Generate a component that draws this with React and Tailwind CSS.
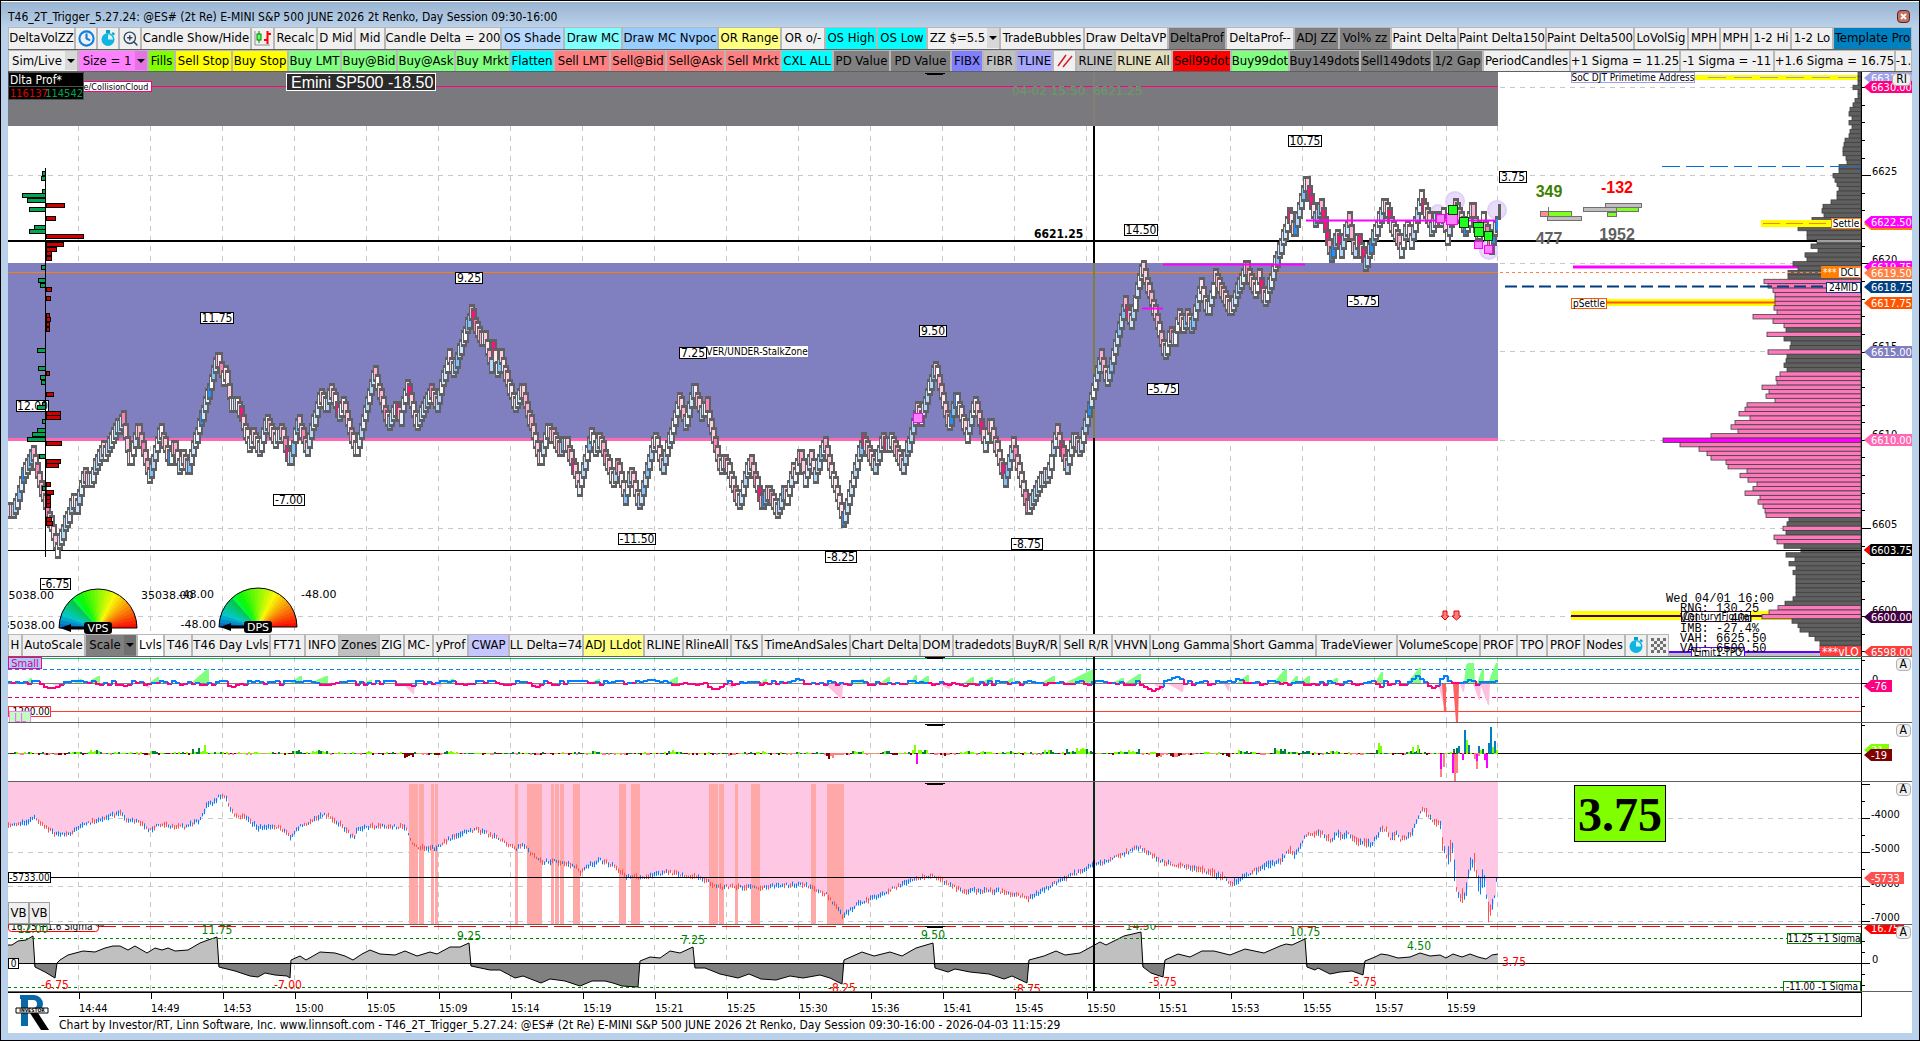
import React from 'react';
import { Clock, ZoomIn } from 'lucide-react';

const GRAY = 'bg-[#808080]';
const SILVER = 'bg-[#c0c0c0]';
const LIGHT = 'bg-[#f0f0f0]';
const CYAN = 'bg-[#00ffff]';
const GREEN = 'bg-[#80ff80]';
const SALMON = 'bg-[#ff8080]';

const Stopwatch = () => (
  <svg viewBox="0 0 18 18" className="h-[18px] w-[18px]">
    <rect x="7" y="1" width="4" height="3" fill="#00a0d0" />
    <path d="M14 3l2 2-1.500 1.500-2-2z" fill="#00a0d0" />
    <circle cx="9" cy="10.500" r="6.500" fill="#10b4e0" />
    <path d="M9 10.500V5.500A5 5 0 0 1 14 10.500z" fill="#d8f2fa" />
  </svg>
);

const CandleIcon = () => (
  <svg viewBox="0 0 18 18" className="h-[18px] w-[18px]">
    <path d="M1 2v14h15" stroke="#909090" fill="none" />
    <path d="M5 2v12" stroke="#008000" />
    <rect x="3" y="5" width="4" height="6" fill="#60ff60" stroke="#008000" />
    <path d="M13.500 2v13M10 11h4M13 5h4" stroke="#ff0000" strokeWidth="2" />
  </svg>
);

const SlashIcon = () => (
  <svg viewBox="0 0 18 18" className="h-[18px] w-[18px]">
    <path d="M2 14L10 3M7 15L16 4" stroke="#d02020" strokeWidth="1.500" />
  </svg>
);

const CheckerIcon = () => (
  <svg viewBox="0 0 15 15" className="h-[15px] w-[15px]">
    {[0, 1, 2, 3, 4].map((r) =>
      [0, 1, 2, 3, 4].map((c) => (r + c) % 2 === 0 && (
        <rect key={`${r}-${c}`} x={c * 3} y={r * 3} width="3" height="3" fill="#707070" />
      ))
    )}
  </svg>
);

const topRow = [
  { text: 'DeltaVolZZ', w: 'w-[67px]', bg: LIGHT },
  { label: 'Clock', icon: <Clock className="h-[17px] w-[17px] text-[#1080e0]" strokeWidth={3} />, w: 'w-[22px]', bg: LIGHT },
  { label: 'Stopwatch', icon: <Stopwatch />, w: 'w-[22px]', bg: LIGHT },
  { label: 'Zoom', icon: <ZoomIn className="h-[17px] w-[17px] text-[#304860]" strokeWidth={2} />, w: 'w-[22px]', bg: LIGHT },
  { text: 'Candle Show/Hide', w: 'w-[110px]', bg: LIGHT },
  { label: 'Candles', icon: <CandleIcon />, w: 'w-[23px]', bg: LIGHT },
  { text: 'Recalc', w: 'w-[43px]', bg: LIGHT },
  { text: 'D Mid', w: 'w-[38px]', bg: LIGHT },
  { text: 'Mid', w: 'w-[30px]', bg: LIGHT },
  { text: 'Candle Delta = 200', w: 'w-[116px]', bg: LIGHT },
  { text: 'OS Shade', w: 'w-[63px]', bg: 'bg-[#b4d8ff]' },
  { text: 'Draw MC', w: 'w-[58px]', bg: 'bg-[#80ffff]' },
  { text: 'Draw MC Nvpoc', w: 'w-[96px]', bg: 'bg-[#99ccff]' },
  { text: 'OR Range', w: 'w-[63px]', bg: 'bg-[#ffff80]' },
  { text: 'OR o/-', w: 'w-[44px]', bg: LIGHT },
  { text: 'OS High', w: 'w-[52px]', bg: CYAN },
  { text: 'OS Low', w: 'w-[50px]', bg: CYAN },
  { text: 'ZZ $=5.5', w: 'w-[73px]', bg: LIGHT, drop: 'bg-[#d8d8d8]' },
  { text: 'TradeBubbles', w: 'w-[84px]', bg: LIGHT },
  { text: 'Draw DeltaVP', w: 'w-[84px]', bg: LIGHT },
  { text: 'DeltaProf', w: 'w-[58px]', bg: GRAY },
  { text: 'DeltaProf--', w: 'w-[68px]', bg: LIGHT },
  { text: 'ADJ ZZ', w: 'w-[45px]', bg: GRAY },
  { text: 'Vol% zz', w: 'w-[52px]', bg: GRAY },
  { text: 'Paint Delta', w: 'w-[67px]', bg: LIGHT },
  { text: 'Paint Delta150', w: 'w-[88px]', bg: LIGHT },
  { text: 'Paint Delta500', w: 'w-[88px]', bg: LIGHT },
  { text: 'LoVolSig', w: 'w-[54px]', bg: LIGHT },
  { text: 'MPH', w: 'w-[32px]', bg: LIGHT },
  { text: 'MPH', w: 'w-[31px]', bg: LIGHT },
  { text: '1-2 Hi', w: 'w-[40px]', bg: LIGHT },
  { text: '1-2 Lo', w: 'w-[42px]', bg: LIGHT },
  { text: 'Template Pro', w: 'w-[79px]', bg: 'bg-[#0080c0]' }
];

const tradeRow = [
  { text: 'Sim/Live', w: 'w-[70px]', bg: LIGHT, drop: 'bg-[#d8d8d8]' },
  { text: 'Size = 1', w: 'w-[70px]', bg: 'bg-[#ff80ff]', drop: 'bg-[#e673e6]' },
  { text: 'Fills', w: 'w-[27px]', bg: 'bg-[#80ff00]' },
  { text: 'Sell Stop', w: 'w-[57px]', bg: 'bg-[#ffff00]' },
  { text: 'Buy Stop', w: 'w-[56px]', bg: 'bg-[#ffff00]' },
  { text: 'Buy LMT', w: 'w-[53px]', bg: GREEN },
  { text: 'Buy@Bid', w: 'w-[56px]', bg: GREEN },
  { text: 'Buy@Ask', w: 'w-[58px]', bg: GREEN },
  { text: 'Buy Mrkt', w: 'w-[55px]', bg: GREEN },
  { text: 'Flatten', w: 'w-[44px]', bg: CYAN },
  { text: 'Sell LMT', w: 'w-[56px]', bg: SALMON },
  { text: 'Sell@Bid', w: 'w-[56px]', bg: SALMON },
  { text: 'Sell@Ask', w: 'w-[59px]', bg: SALMON },
  { text: 'Sell Mrkt', w: 'w-[56px]', bg: SALMON },
  { text: 'CXL ALL', w: 'w-[52px]', bg: CYAN },
  { text: 'PD Value', w: 'w-[57px]', bg: GRAY },
  { text: 'PD Value', w: 'w-[61px]', bg: GRAY },
  { text: 'FIBX', w: 'w-[32px]', bg: 'bg-[#8080ff]' },
  { text: 'FIBR', w: 'w-[33px]', bg: SILVER },
  { text: 'TLINE', w: 'w-[37px]', bg: 'bg-[#a6a6ff]' },
  { label: 'Parallel lines', icon: <SlashIcon />, w: 'w-[23px]', bg: LIGHT },
  { text: 'RLINE', w: 'w-[39px]', bg: SILVER },
  { text: 'RLINE All', w: 'w-[57px]', bg: 'bg-[#e0dcbc]' },
  { text: 'Sell99dot', w: 'w-[59px]', bg: 'bg-[#ff0000]' },
  { text: 'Buy99dot', w: 'w-[58px]', bg: GREEN },
  { text: 'Buy149dots', w: 'w-[71px]', bg: GRAY },
  { text: 'Sell149dots', w: 'w-[72px]', bg: GRAY },
  { text: '1/2 Gap', w: 'w-[51px]', bg: GRAY },
  { text: 'PeriodCandles', w: 'w-[87px]', bg: LIGHT },
  { text: '+1 Sigma = 11.25', w: 'w-[110px]', bg: LIGHT },
  { text: '-1 Sigma = -11', w: 'w-[94px]', bg: LIGHT },
  { text: '+1.6 Sigma = 16.75', w: 'w-[121px]', bg: LIGHT },
  { text: '-1.', w: 'w-[17px]', bg: LIGHT }
];

const chartRow = [
  { text: 'H', w: 'w-[14px]', bg: LIGHT },
  { text: 'AutoScale', w: 'w-[63px]', bg: LIGHT },
  { text: 'Scale', w: 'w-[52px]', bg: GRAY, drop: 'bg-[#707070]' },
  { text: 'Lvls', w: 'w-[27px]', bg: 'bg-white' },
  { text: 'T46', w: 'w-[28px]', bg: LIGHT },
  { text: 'T46 Day Lvls', w: 'w-[78px]', bg: LIGHT },
  { text: 'FT71', w: 'w-[35px]', bg: LIGHT },
  { text: 'INFO', w: 'w-[34px]', bg: LIGHT },
  { text: 'Zones', w: 'w-[40px]', bg: SILVER },
  { text: 'ZIG', w: 'w-[25px]', bg: LIGHT },
  { text: 'MC-', w: 'w-[29px]', bg: LIGHT },
  { text: 'yProf', w: 'w-[35px]', bg: LIGHT },
  { text: 'CWAP', w: 'w-[41px]', bg: 'bg-[#c6c6ff]' },
  { text: 'LL Delta=74', w: 'w-[74px]', bg: LIGHT },
  { text: 'ADJ LLdot', w: 'w-[61px]', bg: 'bg-[#ffff80]' },
  { text: 'RLINE', w: 'w-[39px]', bg: LIGHT },
  { text: 'RlineAll', w: 'w-[48px]', bg: LIGHT },
  { text: 'T&S', w: 'w-[31px]', bg: LIGHT },
  { text: 'TimeAndSales', w: 'w-[88px]', bg: LIGHT },
  { text: 'Chart Delta', w: 'w-[70px]', bg: LIGHT },
  { text: 'DOM', w: 'w-[33px]', bg: LIGHT },
  { text: 'tradedots', w: 'w-[60px]', bg: LIGHT },
  { text: 'BuyR/R', w: 'w-[47px]', bg: LIGHT },
  { text: 'Sell R/R', w: 'w-[52px]', bg: LIGHT },
  { text: 'VHVN', w: 'w-[38px]', bg: LIGHT },
  { text: 'Long Gamma', w: 'w-[81px]', bg: LIGHT },
  { text: 'Short Gamma', w: 'w-[85px]', bg: LIGHT },
  { text: 'TradeViewer', w: 'w-[81px]', bg: LIGHT },
  { text: 'VolumeScope', w: 'w-[83px]', bg: LIGHT },
  { text: 'PROF', w: 'w-[37px]', bg: LIGHT },
  { text: 'TPO', w: 'w-[30px]', bg: LIGHT },
  { text: 'PROF', w: 'w-[37px]', bg: LIGHT },
  { text: 'Nodes', w: 'w-[41px]', bg: LIGHT },
  { label: 'Stopwatch', icon: <Stopwatch />, w: 'w-[22px]', bg: LIGHT },
  { label: 'Pattern', icon: <CheckerIcon />, w: 'w-[22px]', bg: LIGHT }
];

const ToolBar = ({ items, className }) => (
  <div className={`flex overflow-hidden bg-[#c0c0c0] ${className}`}>
    {items.map((item, i) => (
      <button
        key={i}
        type="button"
        aria-label={item.label}
        className={`flex shrink-0 items-center justify-center overflow-hidden whitespace-nowrap border-x border-t border-[#b8b8b8] pb-px text-[13px] leading-4 text-black ${item.bg} ${item.w}`}
      >
        {item.drop ? (
          <>
            <span className="flex-1 text-center">{item.text}</span>
            <span className={`flex h-full w-3 items-center justify-center ${item.drop}`}>
              <svg viewBox="0 0 8 4" className="h-1 w-2"><path d="M0 0h8L4 4z" /></svg>
            </span>
          </>
        ) : (
          item.icon || item.text
        )}
      </button>
    ))}
  </div>
);

/* ---------- chart data ---------- */

// deterministic noise in 0..1
const noise = (n) => {
  const s = Math.sin(n * 12.9898 + 4.137) * 43758.5453;
  return s - Math.floor(s);
};

const swings = [
  [8, 500], [13, 520], [22, 467], [24, 480], [32, 447], [56, 556], [72, 493], [76, 512], [83, 467], [89, 490],
  [101, 440], [104, 463], [113, 423], [122, 427], [129, 470], [137, 420], [148, 485], [159, 421], [169, 470], [173, 438],
  [178, 475], [182, 448], [187, 476], [217, 347], [222, 385], [225, 365], [230, 413], [237, 395], [248, 452], [252, 428],
  [258, 458], [266, 412], [274, 449], [280, 421], [289, 470], [297, 412], [306, 458], [319, 386], [325, 415], [330, 382],
  [338, 422], [342, 395], [355, 460], [373, 364], [387, 431], [395, 401], [400, 425], [406, 377], [416, 432], [430, 381],
  [436, 414], [448, 346], [452, 379], [470, 305], [481, 348], [484, 330], [490, 372], [492, 337], [496, 379], [500, 350],
  [514, 414], [521, 381], [539, 467], [547, 421], [559, 457], [565, 434], [578, 494], [591, 425], [594, 456], [598, 430],
  [612, 487], [617, 456], [624, 503], [630, 465], [638, 511], [654, 430], [662, 476], [678, 390], [684, 431], [693, 381],
  [700, 421], [706, 398], [719, 475], [724, 452], [738, 511], [749, 452], [761, 511], [767, 483], [776, 520], [783, 482],
  [786, 507], [792, 463], [794, 484], [799, 443], [804, 486], [810, 448], [814, 481], [824, 434], [842, 529], [862, 430],
  [874, 476], [881, 430], [885, 456], [890, 430], [902, 476], [916, 399], [920, 425], [934, 359], [948, 432], [955, 390],
  [966, 441], [974, 395], [984, 450], [989, 417], [1004, 486], [1012, 438], [1027, 516], [1044, 465], [1047, 484], [1056, 421],
  [1065, 476], [1073, 430], [1079, 458], [1100, 350], [1106, 388], [1124, 297], [1130, 330], [1141, 258], [1151, 310], [1164, 361],
  [1169, 325], [1173, 350], [1178, 306], [1182, 335], [1186, 306], [1191, 335], [1200, 279], [1207, 321], [1214, 270], [1230, 317],
  [1245, 258], [1254, 299], [1258, 270], [1264, 308], [1289, 205], [1293, 241], [1305, 169], [1314, 228], [1320, 196], [1330, 264],
  [1336, 227], [1340, 256], [1348, 213], [1353, 261], [1357, 227], [1364, 273], [1383, 195], [1400, 256], [1405, 219], [1410, 247],
  [1420, 190], [1430, 235], [1436, 210], [1440, 228], [1442, 205], [1446, 246], [1454, 196], [1465, 237], [1471, 199], [1477, 245],
  [1482, 213], [1490, 255], [1498, 205]
];

// keep the brick bodies inside the swing extremes
const pivots = swings.map(([x, y], i) => {
  const prev = swings[i - 1] || swings[i + 1];
  return [x, y < prev[1] ? y + 8 : y - 8];
});

const valueAt = (pts, x) => {
  for (let i = 1; i < pts.length; i++) {
    if (x <= pts[i][0]) {
      const [x0, y0] = pts[i - 1];
      const [x1, y1] = pts[i];
      return y0 + ((y1 - y0) * (x - x0)) / (x1 - x0 || 1);
    }
  }
  return pts[pts.length - 1][1];
};

const upColors = ['#ffffff', '#e6f2ff', '#cce6ff', '#b0d8ff', '#80c0ff', '#e6f2ff', '#cce6ff', '#b0d8ff', '#f4f8ff'];
const downColors = ['#ffe6f0', '#ffe6f0', '#ffcce0', '#ffb0d0', '#ff80b8', '#ffcce0', '#fff4f8', '#ffcce0', '#ffb0d0'];

const bricks = [];
for (let x = 8; x <= 1496; x += 2) {
  const y = Math.round((valueAt(pivots, x) - 175) / 4.41) * 4.41 + 175;
  const up = valueAt(pivots, x + 2) < valueAt(pivots, x);
  const n = noise(x);
  let fill = (up ? upColors : downColors)[Math.floor(n * 9)];
  const strong = x > 1290 ? 0.82 : 0.96;
  if (noise(x + 0.5) > strong) fill = up ? '#2090ff' : '#ff1080';
  bricks.push({ x, y, fill });
}

const profile = [
  3, 3, 3, 8, 3, 3, 6, 8, 11, 12, 9, 12, 9, 11, 12, 16, 17, 18, 18, 15, 14, 22, 22, 28, 26, 24, 22, 24, 24, 30, 38, 39,
  37, 49, 45, 63, 54, 54, 44, 50, 43, 56, 54, 68, 63, 73, 73, 97, 93, 88, 86, 86, 86, 87, 84, 108, 88, 77, 75, 94, 77, 70,
  71, 93, 74, 75, 77, 74, 81, 85, 84, 99, 92, 95, 86, 114, 116, 122, 111, 126, 130, 123, 150, 198, 181, 162, 154, 150,
  135, 133, 114, 121, 113, 104, 108, 116, 101, 103, 98, 96, 95, 72, 74, 78, 75, 87, 84, 77, 60, 75, 66, 72, 65, 68, 65,
  65, 65, 65, 65, 68, 76, 83, 92, 99, 69, 63, 61, 52, 46, 41, 41, 41
];
const pinkRows = [59, 63, 103, 105, 106, 121, 122, 123];
const isPink = (i) => (i >= 47 && i <= 57) || (i >= 68 && i <= 100) || pinkRows.includes(i);

const askBars = [
  [171, 3], [176, 4], [189, 3], [193, 23], [198, 18], [207, 16], [225, 11], [229, 16], [265, 4], [278, 7], [283, 5],
  [348, 8], [366, 7], [375, 5], [380, 4], [402, 3], [405, 8], [419, 3], [428, 8], [432, 13], [437, 18], [454, 6], [486, 3]
];
const bidBars = [
  [203, 18], [216, 9], [234, 37], [242, 17], [247, 10], [251, 5], [256, 5], [287, 5], [296, 4], [313, 3], [317, 4],
  [322, 3], [327, 3], [371, 3], [392, 7], [411, 14], [415, 14], [441, 15], [459, 14], [463, 12], [482, 4], [490, 7],
  [495, 4], [499, 4], [503, 4], [517, 5], [521, 6]
];

const swingTags = [
  [16, 400, 33, '12.00'], [200, 312, 34, '11.75'], [455, 272, 28, '9.25'], [273, 494, 32, '-7.00'], [40, 578, 31, '-6.75'],
  [618, 533, 38, '-11.50'], [679, 347, 28, '7.25'], [919, 325, 28, '9.50'], [825, 551, 32, '-8.25'], [1011, 538, 32, '-8.75'],
  [1124, 224, 34, '14.50'], [1147, 383, 32, '-5.75'], [1347, 295, 32, '-5.75'], [1288, 135, 34, '10.75']
];

const cumulative = [
  [8, 824], [12, 825], [28, 822], [32, 817], [40, 822], [55, 835], [70, 833], [85, 824], [105, 817], [121, 813], [128, 822],
  [138, 820], [148, 830], [160, 825], [185, 827], [200, 820], [207, 804], [212, 804], [218, 797], [225, 798], [233, 814],
  [243, 817], [258, 828], [275, 826], [285, 831], [290, 838], [297, 828], [310, 822], [320, 815], [329, 816], [340, 825],
  [353, 838], [357, 830], [370, 826], [390, 827], [405, 826], [410, 840], [415, 847], [435, 848], [445, 841], [460, 834],
  [475, 829], [490, 835], [500, 840], [515, 849], [523, 844], [535, 858], [541, 862], [555, 861], [575, 866], [580, 872],
  [590, 865], [600, 860], [615, 867], [625, 876], [640, 878], [667, 872], [704, 879], [716, 887], [759, 887], [802, 884],
  [826, 894], [842, 916], [857, 904], [882, 894], [912, 879], [931, 875], [961, 891], [998, 891], [1028, 898], [1053, 884],
  [1084, 869], [1108, 860], [1139, 847], [1163, 862], [1194, 869], [1224, 877], [1231, 884], [1250, 873], [1261, 867],
  [1280, 861], [1289, 850], [1294, 856], [1307, 833], [1311, 836], [1319, 832], [1331, 840], [1337, 832], [1341, 838],
  [1347, 833], [1358, 841], [1372, 844], [1380, 830], [1386, 830], [1390, 840], [1396, 833], [1400, 840], [1411, 835],
  [1421, 809], [1427, 814], [1433, 821], [1440, 824], [1442, 845], [1447, 858], [1452, 848], [1456, 890], [1460, 897],
  [1465, 894], [1470, 863], [1474, 861], [1479, 890], [1483, 874], [1488, 912], [1493, 904], [1497, 872]
];
const cumBars = [];
for (let x = 8; x <= 1497; x += 2) {
  const y = valueAt(cumulative, x) + (noise(x) - 0.5) * 3;
  const up = valueAt(cumulative, x + 2) < valueAt(cumulative, x - 2);
  const wild = x > 1440 ? 20 : x > 1190 ? 7 : 4;
  cumBars.push({ x, y, h: 2 + noise(x + 7) * wild, up: noise(x + 3) > (up ? 0.25 : 0.7) });
}
const cumArea = `M8 782 ${cumBars.map((b) => `L${b.x} ${b.y}h2`).join('')} L1499 870V782z`;

const alertBands = [
  [409, 9], [419, 5], [431, 3], [435, 3], [515, 3], [527, 15], [551, 3], [555, 4], [560, 4], [573, 7], [619, 7], [631, 9],
  [709, 9], [719, 5], [735, 3], [751, 9], [811, 5], [827, 17]
];

const zigzag = [
  [8, 945], [12, 945], [18, 941], [26, 940], [33, 936], [35, 967], [45, 972], [55, 978], [57, 963], [60, 960], [68, 955],
  [83, 951], [95, 952], [105, 948], [113, 946], [120, 946], [128, 950], [135, 946], [147, 953], [155, 948], [162, 950],
  [168, 948], [175, 951], [188, 950], [200, 943], [208, 940], [217, 937], [219, 967], [235, 971], [250, 976], [258, 977],
  [265, 973], [275, 975], [287, 976], [290, 978], [291, 960], [300, 956], [306, 960], [320, 952], [335, 953], [345, 956],
  [353, 960], [362, 954], [370, 950], [380, 954], [395, 955], [405, 951], [417, 956], [430, 952], [437, 954], [450, 947],
  [460, 947], [469, 943], [471, 966], [490, 970], [500, 970], [515, 978], [523, 976], [541, 983], [550, 979], [565, 981],
  [580, 986], [592, 981], [605, 981], [613, 983], [622, 986], [638, 987], [640, 961], [650, 957], [660, 958], [670, 951],
  [680, 953], [693, 947], [695, 968], [705, 968], [720, 974], [738, 978], [749, 974], [761, 979], [776, 980], [790, 976],
  [803, 978], [820, 975], [830, 978], [842, 984], [844, 960], [862, 952], [874, 956], [890, 952], [902, 956], [916, 948],
  [933, 943], [935, 968], [948, 972], [955, 969], [970, 972], [989, 974], [1004, 979], [1012, 976], [1027, 983], [1029, 960],
  [1044, 956], [1056, 951], [1065, 955], [1080, 953], [1100, 942], [1106, 945], [1124, 936], [1141, 932], [1143, 967],
  [1151, 973], [1163, 977], [1165, 960], [1178, 954], [1190, 957], [1202, 951], [1214, 951], [1230, 955], [1245, 949],
  [1264, 953], [1280, 946], [1286, 944], [1292, 945], [1305, 939], [1307, 967], [1315, 970], [1318, 968], [1330, 974],
  [1340, 972], [1352, 971], [1363, 975], [1365, 961], [1375, 957], [1381, 954], [1388, 955], [1398, 958], [1410, 957],
  [1420, 953], [1430, 956], [1440, 955], [1446, 958], [1453, 954], [1462, 957], [1470, 954], [1478, 957], [1486, 959],
  [1492, 955], [1498, 954]
];
const clipZig = (keep) =>
  `M8 963L${zigzag.map(([x, y]) => `${x} ${keep === 'up' ? Math.min(y, 963) : Math.max(y, 963)}`).join('L')}L1498 963z`;

const zigLabels = [
  [33, 933, '12.00', '#008000'], [217, 934, '11.75', '#008000'], [469, 940, '9.25', '#008000'], [693, 944, '7.25', '#008000'],
  [933, 939, '9.50', '#008000'], [1141, 930, '14.50', '#008000'], [1305, 936, '10.75', '#008000'], [1419, 950, '4.50', '#008000'],
  [55, 989, '-6.75', '#ff0000'], [288, 989, '-7.00', '#ff0000'], [842, 992, '-8.25', '#ff0000'], [1027, 993, '-8.75', '#ff0000'],
  [1163, 986, '-5.75', '#ff0000'], [1363, 986, '-5.75', '#ff0000']
];

// [peak x, height, ramp width]
const buyRamps = [
  [30, 5, 4], [80, 4, 6], [98, 7, 12], [157, 6, 8], [207, 14, 16], [300, 7, 10], [326, 7, 16], [370, 3, 6], [452, 4, 10],
  [598, 4, 8], [676, 6, 10], [765, 4, 5], [862, 4, 12], [888, 6, 8], [915, 8, 4], [927, 7, 10], [972, 6, 8], [991, 6, 10],
  [1011, 5, 6], [1053, 7, 12], [1093, 14, 28], [1122, 5, 10], [1139, 9, 14], [1247, 8, 10], [1285, 14, 12], [1296, 7, 6],
  [1308, 7, 8], [1336, 5, 8], [1381, 11, 6], [1419, 15, 12], [1482, 14, 5], [1496, 20, 8]
];
const sellRamps = [
  [60, 4, 8], [148, 4, 6], [413, 10, 10], [440, 3, 6], [540, 5, 8], [732, 4, 6], [841, 15, 16], [949, 5, 10], [1162, 7, 8],
  [1182, 8, 14], [1228, 7, 4], [1444, 22, 6], [1463, 8, 3], [1479, 16, 6], [1488, 21, 8]
];
const dips = [[50, -6, 10], [124, -3, 6], [231, -5, 6], [411, -4, 5], [535, -4, 6], [714, -7, 10], [870, -3, 4], [963, -4, 5], [1152, -8, 10], [1380, -4, 4], [1432, -5, 7]];
const bumps = [[650, 4, 8], [797, 4, 6], [1175, 6, 8], [1237, 5, 4], [1416, 7, 5], [1443, 8, 4], [1469, 3, 6]];

const smallTrades = [];
for (let x = 8; x <= 1496; x += 4) {
  let v = (noise(x * 3) - 0.5) * 5;
  [...dips, ...bumps].forEach(([cx, h, w]) => {
    if (Math.abs(x - cx) < w) v = h * (1 - Math.abs(x - cx) / (w * 1.6));
  });
  smallTrades.push({ x, v });
}

const histogram = [];
for (let x = 8; x <= 1498; x += 2) {
  let v = (noise(x * 1.7) - 0.5) * 3;
  buyRamps.forEach(([cx, h, w]) => {
    if (x <= cx && x > cx - w) v = 1 + h * 0.35 * noise(x);
  });
  sellRamps.forEach(([cx, h, w]) => {
    if (x <= cx && x > cx - w && h < 20) v = -1 - h * 0.35 * noise(x);
  });
  const strong = noise(x + 11) > 0.5;
  const fill = v > 0 ? (strong ? '#80ff00' : '#008040') : strong ? '#ff8080' : '#800000';
  histogram.push({ x, v, fill });
}
const spikes = [
  [204, 8, '#80ff00'], [914, 8, '#80ff00'], [916, -10, '#ff00ff'], [1378, 10, '#80ff00'], [1380, 7, '#80ff00'],
  [1412, 6, '#80ff00'], [1417, 8, '#80ff00'], [1440, -23, '#ff8080'], [1440, -15, '#ff00ff'], [1443, -13, '#ff8080'],
  [1452, -19, '#ff00ff'], [1454, -28, '#ff8080'], [1456, -19, '#ff8080'], [1453, 4, '#008040'], [1456, 5, '#008040'],
  [1458, 7, '#0080c0'], [1462, -6, '#ff00ff'], [1464, 23, '#0080c0'], [1466, 13, '#80ff00'], [1468, 8, '#0080c0'],
  [1476, -15, '#ff8080'], [1476, -7, '#ff00ff'], [1478, 7, '#0080c0'], [1484, -6, '#ff00ff'], [1486, -14, '#ff00ff'],
  [1488, 10, '#0080c0'], [1490, 26, '#0080c0'], [1492, 6, '#80ff00'], [1494, 12, '#0080c0']
];

const times = [
  '14:44', '14:49', '14:53', '15:00', '15:05', '15:09', '15:14', '15:19', '15:21', '15:25',
  '15:30', '15:36', '15:41', '15:45', '15:50', '15:51', '15:53', '15:55', '15:57', '15:59'
];
const gridX = [...times.map((_, i) => 78 + i * 72), 1497];

/* ---------- chart parts ---------- */

const Grid = ({ top, bottom, rows }) => (
  <g stroke="#c8c8c8" strokeDasharray="5 5" shapeRendering="crispEdges">
    {gridX.map((x) => <path key={x} d={`M${x}.5 ${top}V${bottom}`} />)}
    {rows.map((y) => <path key={y} d={`M8 ${y}.5H4000`} />)}
  </g>
);

const Tag = ({ x, y, w, h = 12, text, size = 12, border = '#000000', fill = '#ffffff', color = '#000000' }) => (
  <g>
    <rect x={x + 0.5} y={y + 0.5} width={w - 1} height={h - 1} fill={fill} stroke={border} />
    <text x={x + w / 2} y={y + h / 2 + size * 0.37} textAnchor="middle" fontSize={size} fill={color}>{text}</text>
  </g>
);

const Badge = ({ y, text, fill, w = 48, tip }) => (
  <g>
    <path d={`M1864 ${y}l7 -6h${w - 7}v12h-${w - 7}z`} fill={fill} />
    {tip && <path d={`M1864 ${y}l6 -5v10z`} fill={tip} />}
    <text x="1871" y={y + 4} fontSize="11" fill="#ffffff">{text}</text>
  </g>
);

const Handle = ({ y }) => <path d={`M925 ${y}h20v1h-2v1h-16v-1h-2z`} fill="#000000" />;

const Pane = ({ top, h, height, plot, side, children }) => (
  <section className="relative flex border-b border-[#606060] bg-white">
    <svg className={`min-w-0 flex-1 ${height}`}>
      <g transform={`translate(-8 ${-top})`}>{plot}</g>
    </svg>
    <svg viewBox={`1498 ${top} 414 ${h}`} className={`w-[414px] shrink-0 ${height}`}>
      {side}
      <path d={`M1861.5 ${top}v${h}`} stroke="#000000" />
    </svg>
    {children}
  </section>
);

const ScaleButton = ({ text = 'A' }) => (
  <button type="button" className="absolute right-px top-px h-[13px] rounded-sm border border-[#b0b0b0] bg-[#f0f0f0] px-[3px] text-[12px] leading-[11px]">
    {text}
  </button>
);

const Gauge = ({ cx, cy, text }) => {
  const wedges = Array.from({ length: 30 }, (_, i) => {
    const a0 = Math.PI * (1 - i / 30);
    const a1 = Math.PI * (1 - (i + 1.3) / 30);
    const t = i / 29;
    const hue = t < 0.33 ? 208 - t * 270 : t < 0.66 ? 119 - (t - 0.33) * 180 : 60 - (t - 0.66) * 170;
    return (
      <path
        key={i}
        d={`M${cx} ${cy}L${cx + 39 * Math.cos(a0)} ${cy - 39 * Math.sin(a0)}L${cx + 39 * Math.cos(a1)} ${Math.min(cy, cy - 39 * Math.sin(a1))}z`}
        fill={`hsl(${hue} 95% ${t < 0.25 ? 40 : 50}%)`}
      />
    );
  });
  return (
    <g>
      {wedges}
      <path d={`M${cx - 39} ${cy}a39 39 0 0 1 78 0z`} fill="none" stroke="#000000" />
      <path d={`M${cx - 38} ${cy}l11 -4v2.500h27v3h-27v2.500z`} />
      <rect x={cx - 14} y={cy - 6} width="28" height="12" rx="3" />
      <text x={cx} y={cy + 4} textAnchor="middle" fontSize="11" fill="#ffffff">{text}</text>
    </g>
  );
};

const PricePlot = () => (
  <g>
    <Grid top={126} bottom={656} rows={[175, 528, 616]} />
    <path d="M1498 87.500H4000M1498 263.500H4000M1498 351.500H4000M1498 440.500H4000" stroke="#c8c8c8" strokeDasharray="5 5" />
    <rect x="8" y="72" width="1490" height="54" fill="#7a7a7e" />
    <rect x="8" y="263" width="1490" height="175" fill="#8080c0" />
    <path d="M8 86.500H1498" stroke="#ff0080" />
    <path d="M8 272.500H1498" stroke="#ff8000" />
    <rect x="8" y="438" width="1492" height="3" fill="#ff69b4" />
    <path d="M8 550.500H4000" stroke="#000000" />
    <rect x="8" y="240" width="4000" height="2" />

    {/* crosshair */}
    <rect x="1093" y="72" width="2" height="54" fill="#857f78" />
    <rect x="1093" y="126" width="2" height="137" />
    <rect x="1093" y="263" width="2" height="175" fill="#7f7f40" />
    <rect x="1093" y="438" width="2" height="220" />

    <g fill="#e8dcfa" stroke="#e0d0fa" strokeWidth="2">
      <circle cx="1455" cy="201" r="9" />
      <circle cx="1438" cy="212" r="7" />
      <circle cx="1497" cy="210" r="9" />
      <circle cx="1494" cy="232" r="8" />
      <circle cx="1489" cy="250" r="9" />
    </g>

    {bricks.map((b) => (
      <g key={b.x} shapeRendering="crispEdges">
        <rect x={b.x - 1} y={b.y - 8} width="6" height="17" fill="#606060" />
        <rect x={b.x} y={b.y - 5} width="3" height="11" fill={b.fill} />
      </g>
    ))}

    <path d="M1306 220.500H1496M1163 264.500H1305M1142 308.500H1163" stroke="#ff00ff" strokeWidth="2" />
    <g fill="#ff80ff" stroke="#ff00ff">
      <rect x="913.500" y="413.500" width="9" height="9" />
      <rect x="1436.500" y="214.500" width="8" height="8" />
      <rect x="1446.500" y="213.500" width="11" height="11" />
      <rect x="1474.500" y="241.500" width="8" height="7" />
      <rect x="1484.500" y="245.500" width="8" height="8" />
    </g>
    <g fill="#20ff20" stroke="#004000">
      <rect x="1448.500" y="205.500" width="9" height="9" />
      <rect x="1459.500" y="217.500" width="9" height="10" />
      <rect x="1473.500" y="222.500" width="10" height="5" />
      <rect x="1474.500" y="227.500" width="9" height="9" />
      <rect x="1484.500" y="231.500" width="8" height="9" />
    </g>

    <Tag x={706} y={346} w={102} h={11} size={10} text="VER/UNDER-StalkZone" border="#ffffff" />
    {swingTags.map(([x, y, w, text]) => <Tag key={`${x}-${y}`} x={x} y={y} w={w} text={text} />)}
    <text x="1034" y="238" fontSize="12" fontWeight="bold">6621.25</text>

    {/* bid/ask delta profile */}
    <path d="M45.500 168V557" stroke="#000000" />
    {askBars.map(([y, w]) => <rect key={y} x={45.5 - w} y={y + 0.5} width={w} height="4" fill="#00a651" stroke="#000000" />)}
    {bidBars.map(([y, w]) => <rect key={y} x="46.500" y={y + 0.5} width={w} height="4" fill="#d00000" stroke="#000000" />)}

    {/* header boxes */}
    <Tag x={80} y={81} w={72} h={11} size={9} text="e/CollisionCloud" border="#ff0080" />
    <rect x="8" y="72" width="76" height="27" />
    <path d="M8.500 72.500h75v27h-75zM9 86.500h75" fill="none" stroke="#505050" />
    <text x="10" y="84" fontSize="12" fill="#ffffff">Dlta Prof*</text>
    <text x="10" y="97" fontSize="11" fill="#e00000">116137</text>
    <text x="83" y="97" fontSize="11" textAnchor="end" fill="#00a651">114542</text>
    <rect x="286.500" y="73.500" width="149" height="17" fill="#2a2a2a" stroke="#ffffff" />
    <text x="291" y="88" fontSize="16" fill="#ffffff" className="font-['Liberation_Sans']">Emini SP500 -18.50</text>
    <text x="1012" y="95" fontSize="12" fill="#6a9a6a" className="font-['DejaVu_Sans']">04-02 15:50&nbsp; 6621.25</text>
    <Handle y={73} />

    {/* pressure gauges */}
    <g fontSize="11" className="font-['DejaVu_Sans']">
      <text x="54" y="599" textAnchor="end">35038.00</text>
      <text x="55" y="629" textAnchor="end">35038.00</text>
      <text x="141" y="599">35038.00</text>
      <text x="214" y="598" textAnchor="end">-48.00</text>
      <text x="216" y="628" textAnchor="end">-48.00</text>
      <text x="301" y="598">-48.00</text>
      <Gauge cx={98} cy={628} text="VPS" />
      <Gauge cx={258} cy={627} text="DPS" />
    </g>
    <path d="M1443 611h4v5h2l-4 4l-4 -4h2zM1454 611h5v5h2l-4.500 4l-4.500 -4h2z" fill="#ff8080" stroke="#e00000" />
  </g>
);

const PriceSide = () => (
  <g>
    <circle cx="1497" cy="210" r="9" fill="#e8dcfa" stroke="#e0d0fa" strokeWidth="2" />
    <rect x="1497" y="204" width="4" height="16" fill="#606060" />
    <path d="M1500 87.500H1861M1500 175.500H1861M1500 263.500H1861M1500 351.500H1861M1500 440.500H1861M1500 528.500H1861M1500 616.500H1861" stroke="#c8c8c8" strokeDasharray="5 5" />
    <rect x="1695" y="75" width="166" height="5" fill="#ffff00" />
    <path d="M1708 77.500H1861" stroke="#a0a0c0" strokeDasharray="18 8" />
    <rect x="1606" y="299" width="255" height="7" fill="#ffff00" />
    <path d="M1606 302.500H1861" stroke="#ff5500" strokeWidth="2" />
    <rect x="1571" y="611" width="290" height="9" fill="#ffff00" />
    <path d="M1571 616H1861" stroke="#400040" strokeWidth="2" />
    <path d="M1573 267H1861" stroke="#ff00ff" strokeWidth="3" />

    {profile.map((w, i) => (
      <rect
        key={i}
        x={1861 - w}
        y={72 + i * 4.41}
        width={w}
        height="4.410"
        fill={i === 83 ? '#ff00ff' : isPink(i) ? '#ff78bc' : '#606060'}
        stroke="#404040"
        strokeWidth="0.8"
      />
    ))}

    <Tag x={1499} y={171} w={28} text="3.75" />
    <Tag x={1571} y={72} w={124} h={11} size={10} text="SoC DJT Primetime Address" border="#a0a0e8" />
    <path d="M1662 166.500H1861" stroke="#0070e0" strokeDasharray="18 6" />
    <rect x="1761" y="220" width="72" height="7" fill="#ffff00" />
    <path d="M1763 223.500H1831" stroke="#ff8000" strokeDasharray="17 6" />
    <Tag x={1831} y={218} w={30} h={11} size={10} text="Settle" border="#ff8000" />
    <path d="M1498 241H1817" stroke="#000000" strokeWidth="2" />
    <path d="M1817 241H1861" stroke="#a0a0a0" strokeWidth="2" />
    <path d="M1500 272.500H1821" stroke="#ff8040" strokeDasharray="3 3" />
    <rect x="1821" y="266" width="40" height="12" fill="#ff8000" />
    <text x="1823" y="276" fontSize="10" fill="#ffffff">***</text>
    <Tag x={1838} y={267} w={23} h={11} size={10} text="DCL" border="#ff8040" />
    <path d="M1505 286.500H1826" stroke="#003c80" strokeWidth="2" strokeDasharray="12 5" />
    <Tag x={1826} y={282} w={35} h={11} size={10} text="24MID" border="#003c80" />
    <Tag x={1571} y={298} w={36} h={11} size={10} text="pSettle" border="#ff5500" />
    <path d="M1498 550.500H1861" stroke="#000000" />

    {/* delta summary */}
    <g fontSize="16" fontWeight="bold" textAnchor="middle" className="font-['Liberation_Sans']">
      <text x="1549" y="197" fill="#3c8000">349</text>
      <text x="1617" y="193" fill="#ff0000">-132</text>
      <text x="1549" y="244" fill="#606060">477</text>
      <text x="1617" y="240" fill="#606060">1952</text>
    </g>
    <g stroke="#707070">
      <rect x="1540.500" y="211.500" width="8" height="5" fill="#ff9090" />
      <rect x="1548.500" y="211.500" width="23" height="5" fill="#80ff20" />
      <rect x="1547.500" y="216.500" width="34" height="4" fill="#c0c0c0" />
      <path d="M1548.500 207v9" />
      <rect x="1605.500" y="203.500" width="36" height="4" fill="#c0c0c0" />
      <rect x="1583.500" y="207.500" width="33" height="4" fill="#c0c0c0" />
      <rect x="1616.500" y="207.500" width="22" height="4" fill="#80ff20" />
      <rect x="1607.500" y="212.500" width="9" height="4" fill="#80ff20" />
    </g>

    <rect x="1669" y="652" width="152" height="5" fill="#c0c0c0" />
    <path d="M1669 652H1821" stroke="#6000ff" strokeWidth="2" />
    <Tag x={1691} y={647} w={54} h={11} size={10} text="Limit1-TPO" border="#6000ff" />
    <Tag x={1681} y={611} w={70} h={11} size={10} text="Century Figure" border="#400040" />
    <g fontSize="12" className="font-['Liberation_Mono']">
      <text x="1666" y="602">Wed 04/01 16:00</text>
      <text x="1680" y="612">RNG: 130.25</text>
      <text x="1680" y="622">VOL: 1.40m</text>
      <text x="1680" y="632">IMB: -27.4%</text>
      <text x="1680" y="642">VAH: 6625.50</text>
      <text x="1680" y="652">VAL: 6590.50</text>
    </g>
    <rect x="1820" y="646" width="41" height="11" fill="#ff3c3c" />
    <text x="1822" y="656" fontSize="12" fill="#ffffff">***vLO</text>

    {/* price scale */}
    {Array.from({ length: 33 }, (_, i) => (
      <path key={i} d={`M1862 ${Math.round(87 + i * 17.64)}.5h${i % 5 === 0 ? 9 : 3}`} stroke="#000000" />
    ))}
    <g fontSize="11">
      <text x="1872" y="175">6625</text>
      <text x="1872" y="263">6620</text>
      <text x="1872" y="350">6615</text>
      <text x="1872" y="438">6610</text>
      <text x="1872" y="528">6605</text>
      <text x="1872" y="614">6600</text>
    </g>
    <Badge y={78} text="6631.00" fill="#a0a0e8" />
    <Badge y={87} text="6630.00" fill="#ff0080" />
    <Badge y={224} text="6622.25" fill="#ff8000" />
    <Badge y={222} text="6622.50" fill="#ff00ff" />
    <Badge y={267} text="6619.75" fill="#ff00ff" />
    <Badge y={273} text="6619.50" fill="#ff8040" />
    <Badge y={287} text="6618.75" fill="#004080" />
    <Badge y={303} text="6617.75" fill="#ff5500" />
    <Badge y={352} text="6615.00" fill="#8080c0" />
    <Badge y={440} text="6610.00" fill="#ff69b4" />
    <Badge y={550} text="6603.75" fill="#000000" tip="#ff0000" />
    <Badge y={617} text="6600.00" fill="#400040" />
    <Badge y={652} text="6598.00" fill="#ff3c3c" />
  </g>
);

const SmallTradesPlot = () => (
  <g>
    <Grid top={657} bottom={722} rows={[]} />
    <path d="M8 658.500H4000" stroke="#00c060" />
    <path d="M8 669.500H4000" stroke="#0080ff" strokeDasharray="4 3" />
    <path d="M8 697.500H4000" stroke="#e00070" strokeDasharray="4 3" />
    <path d="M8 711.500H4000" stroke="#ff4030" />
    {buyRamps.map(([x, h, w]) => <path key={x} d={`M${x - w} 683L${x} ${683 - h}h2V683z`} fill="#80ff80" />)}
    <path d="M1464 683l2 -18l2 -2h6l1 20z" fill="#80ff80" />
    {sellRamps.map(([x, h, w]) => <path key={x} d={`M${x - w} 684L${x} ${684 + h}h1l1 ${-h}z`} fill="#ffc0e0" />)}
    <path d="M1442 684h4v27h-2zM1453 684h6l-1 38h-2z" fill="#ff6060" />
    <path d="M8 683.500H4000" stroke="#808080" />
    {smallTrades.map((s, i) => {
      const prev = smallTrades[i - 1] || s;
      return (
        <path
          key={s.x}
          d={`M${s.x} ${683 - Math.round(prev.v)}V${683 - Math.round(s.v)}h4`}
          fill="none"
          stroke={s.v > 0 ? '#0080ff' : '#ff0080'}
          strokeWidth="2"
        />
      );
    })}
    <rect x="1093" y="657" width="2" height="66" />
    <Handle y={657} />
    <Tag x={8} y={657} w={34} h={12} size={11} text="Small" fill="#a8c8ff" border="#ff0080" color="#e00080" />
    <Tag x={8} y={706} w={43} h={11} size={10} text="-1200.00" border="#ff3030" />
    <Tag x={9} y={711} w={22} h={13} size={12} text="LL" fill="#c0ffc0" border="#ff80ff" color="#ff60ff" />
  </g>
);

const SideRules = ({ rules }) => rules.map(([y, color, dash]) => (
  <path key={y} d={`M1498 ${y}H1861`} stroke={color} strokeDasharray={dash} />
));

const HistogramPlot = () => (
  <g>
    <Grid top={723} bottom={781} rows={[]} />
    <path d="M1498 753.500H4000" stroke="#000000" />
    <path d="M8 753.500H1498" stroke="#006030" />
    {histogram.map((b) => (
      <rect key={b.x} x={b.x} y={b.v > 0 ? 753 - Math.floor(b.v) : 753} width="2" height={Math.floor(Math.abs(b.v)) + 1} fill={b.fill} shapeRendering="crispEdges" />
    ))}
    {spikes.map(([x, v, fill], i) => (
      <rect key={i} x={x} y={v > 0 ? 753 - v : 754} width="2" height={Math.abs(v)} fill={fill} />
    ))}
    <rect x="1093" y="723" width="2" height="60" />
    <Handle y={724} />
  </g>
);

const CumulativePlot = () => (
  <g>
    <Grid top={782} bottom={924} rows={[818, 852, 886, 921]} />
    <path d={cumArea} fill="#fec8e4" />
    {alertBands.map(([x, w]) => <rect key={x} x={x} y="784" width={w} height="140" fill="#ffa8a8" />)}
    {cumBars.map((b) => (
      <rect key={b.x} x={b.x} y={b.y - b.h / 2} width="1" height={b.h} fill={b.up ? '#0080ff' : '#ff5050'} />
    ))}
    <path d="M8 877.500H4000" stroke="#000000" />
    <rect x="1093" y="782" width="2" height="78" fill="#00301c" />
    <rect x="1093" y="860" width="2" height="65" />
    <Handle y={783} />
    <Tag x={8} y={872} w={43} h={11} size={10} text="-5733.00" />
  </g>
);

const ZigzagPlot = () => (
  <g>
    <Grid top={925} bottom={991} rows={[]} />
    <path d={clipZig('up')} fill="#c0c0c0" />
    <path d={clipZig('down')} fill="#808080" />
    <path d={`M${zigzag.map((p) => p.join(' ')).join('L')}`} fill="none" stroke="#000000" />
    <path d="M8 963.500H4000" stroke="#000000" />
    <path d="M8 938.500H4000M8 987.500H4000" stroke="#008000" strokeDasharray="3 3" />
    <path d="M98 926.500H4000" stroke="#ff0000" strokeDasharray="18 6" />
    <rect x="1093" y="925" width="2" height="67" />
    <rect x="8.500" y="918.500" width="90" height="13" rx="3" fill="#ffffff" stroke="#ff0000" />
    <text x="11" y="930" fontSize="10">16.75 +1.6 Sigma **</text>
    {zigLabels.map(([x, y, text, color]) => (
      <text key={x} x={x} y={y} textAnchor="middle" fontSize="12" fill={color}>{text}</text>
    ))}
    <Handle y={926} />
    <Tag x={8} y={958} w={11} h={11} size={10} text="0" />
  </g>
);

const Logo = () => (
  <svg viewBox="0 0 51 41" className="h-[41px] w-[51px] shrink-0">
    <path d="M12 3h14a9 9 0 0 1 0 18h-6v13h-7v-27h-1zM20 8v8h5a4 4 0 0 0 0-8z" fill="#0868a8" fillRule="evenodd" />
    <path d="M8 16h32v5H8z" fill="#ffffff" stroke="#000000" />
    <text x="24" y="20" fontSize="5" fontWeight="bold" textAnchor="middle">INVESTOR</text>
    <path d="M22 21h8l11 17h-8z" fill="#000000" />
  </svg>
);

const TITLE = 'T46_2T_Trigger_5.27.24: @ES# (2t Re) E-MINI S&P 500 JUNE 2026 2t Renko, Day Session 09:30-16:00';

export default function App() {
  return (
    <div className="min-h-screen overflow-hidden border border-black bg-[#b9d1ea] px-[7px] font-['DejaVu_Sans_Condensed','Noto_Sans',sans-serif] text-black">
      <header className="-mx-[7px] flex h-[26px] items-center justify-between border-t border-white bg-linear-to-b from-[#99b4d1] to-[#b9d1ea] px-[7px] pt-1">
        <h1 className="whitespace-nowrap text-[12px] leading-4">{TITLE}</h1>
        <button type="button" aria-label="Close" className="mr-[2px] flex h-[13px] w-[13px] items-center justify-center rounded-sm border border-[#602020] bg-[#c07060]">
          <svg viewBox="0 0 7 7" className="h-[7px] w-[7px]"><path d="M1 1l5 5M6 1l-5 5" stroke="#ffffff" strokeWidth="2" /></svg>
        </button>
      </header>

      <ToolBar items={topRow} className="h-[23px] border-b border-[#606060]" />
      <ToolBar items={tradeRow} className="h-[22px] border-b border-[#606060]" />

      <main>
        <Pane top={72} h={584} height="h-[584px]" plot={<PricePlot />} side={<PriceSide />}>
          <ScaleButton text="RI" />
          <div className="absolute bottom-0 left-0">
            <ToolBar items={chartRow} className="h-[22px]" />
          </div>
        </Pane>

        <Pane
          top={657}
          h={65}
          height="h-[65px]"
          plot={<SmallTradesPlot />}
          side={
            <g>
              <SideRules rules={[[658.5, '#00c060'], [669.5, '#0080ff', '4 3'], [683.5, '#808080'], [697.5, '#e00070', '4 3'], [711.5, '#ff4030']]} />
              <path d="M1862 660.500h3M1862 683.500h8M1862 706.500h3" stroke="#000000" />
              <text x="1872" y="683" fontSize="11">0</text>
              <Badge y={686} text="-76" fill="#ff0080" w={28} />
            </g>
          }
        >
          <ScaleButton />
        </Pane>

        <Pane
          top={723}
          h={58}
          height="h-[58px]"
          plot={<HistogramPlot />}
          side={
            <g>
              <SideRules rules={[[753.5, '#000000']]} />
              <path d="M1862 725.500h3" stroke="#000000" />
              <Badge y={750} text="21" fill="#80ff00" w={25} />
              <Badge y={755} text="-19" fill="#800000" w={28} />
            </g>
          }
        >
          <ScaleButton />
        </Pane>

        <Pane
          top={782}
          h={142}
          height="h-[142px]"
          plot={<CumulativePlot />}
          side={
            <g>
              <SideRules rules={[[818.5, '#c8c8c8', '5 5'], [852.5, '#c8c8c8', '5 5'], [886.5, '#c8c8c8', '5 5'], [921.5, '#c8c8c8', '5 5'], [877.5, '#000000']]} />
              {[784, 801, 818, 835, 852, 869, 886, 904, 921].map((y, i) => (
                <path key={y} d={`M1862 ${y}.5h${i % 2 === 0 ? 8 : 3}`} stroke="#000000" />
              ))}
              <g fontSize="11">
                <text x="1871" y="818">-4000</text>
                <text x="1871" y="852">-5000</text>
                <text x="1871" y="887">-6000</text>
                <text x="1871" y="921">-7000</text>
              </g>
              <Badge y={878} text="-5733" fill="#ff5050" w={40} />
              <rect x="1574.500" y="785.500" width="91" height="56" fill="#80ff00" stroke="#000000" />
              <text x="1620" y="831" textAnchor="middle" fontSize="48" fontWeight="bold" className="font-['Liberation_Serif']">3.75</text>
            </g>
          }
        >
          <ScaleButton />
          <div className="absolute bottom-0 left-0 flex h-[22px]">
            <button type="button" className="w-[21px] border border-[#a0a0a0] bg-[#f0f0f0] text-[13px] leading-4">VB</button>
            <button type="button" className="w-[21px] border border-[#a0a0a0] bg-[#f0f0f0] text-[13px] leading-4">VB</button>
          </div>
        </Pane>

        <Pane
          top={925}
          h={66}
          height="h-[66px]"
          plot={<ZigzagPlot />}
          side={
            <g>
              <SideRules rules={[[926.5, '#ff0000', '18 6'], [938.5, '#008000', '3 3'], [963.5, '#000000'], [987.5, '#008000', '3 3']]} />
              <text x="1502" y="966" fontSize="12" fill="#ff0000">3.75</text>
              <Tag x={1787} y={933} w={74} h={11} size={10} text="11.25 +1 Sigma" border="#008000" />
              <Tag x={1783} y={981} w={78} h={11} size={10} text="-11.00 -1 Sigma" border="#008000" />
              <path d="M1862 941.500h3M1862 952.500h3M1862 963.500h8M1862 974.500h3M1862 985.500h3" stroke="#000000" />
              <text x="1872" y="963" fontSize="11">0</text>
              <Badge y={928} text="16.75" fill="#ff0000" w={40} />
            </g>
          }
        >
          <ScaleButton />
        </Pane>
      </main>

      <footer className="flex bg-white">
        <Logo />
        <div className="min-w-0 flex-1">
          <div className="-ml-[51px] mr-[50px] h-[25px] border-r border-t border-black pl-[51px]">
            <div className="flex h-6 border-b border-black pl-[20px] text-[11px] leading-5">
              {times.map((t) => (
                <div key={t} className="w-[72px] shrink-0">
                  <div className="h-[6px] w-px bg-black" />
                  <time className="block">{t}</time>
                </div>
              ))}
            </div>
          </div>
          <p className="whitespace-nowrap text-[12px] leading-4">
            Chart by Investor/RT, Linn Software, Inc. www.linnsoft.com - {TITLE} - 2026-04-03 11:15:29
          </p>
        </div>
      </footer>
    </div>
  );
}
